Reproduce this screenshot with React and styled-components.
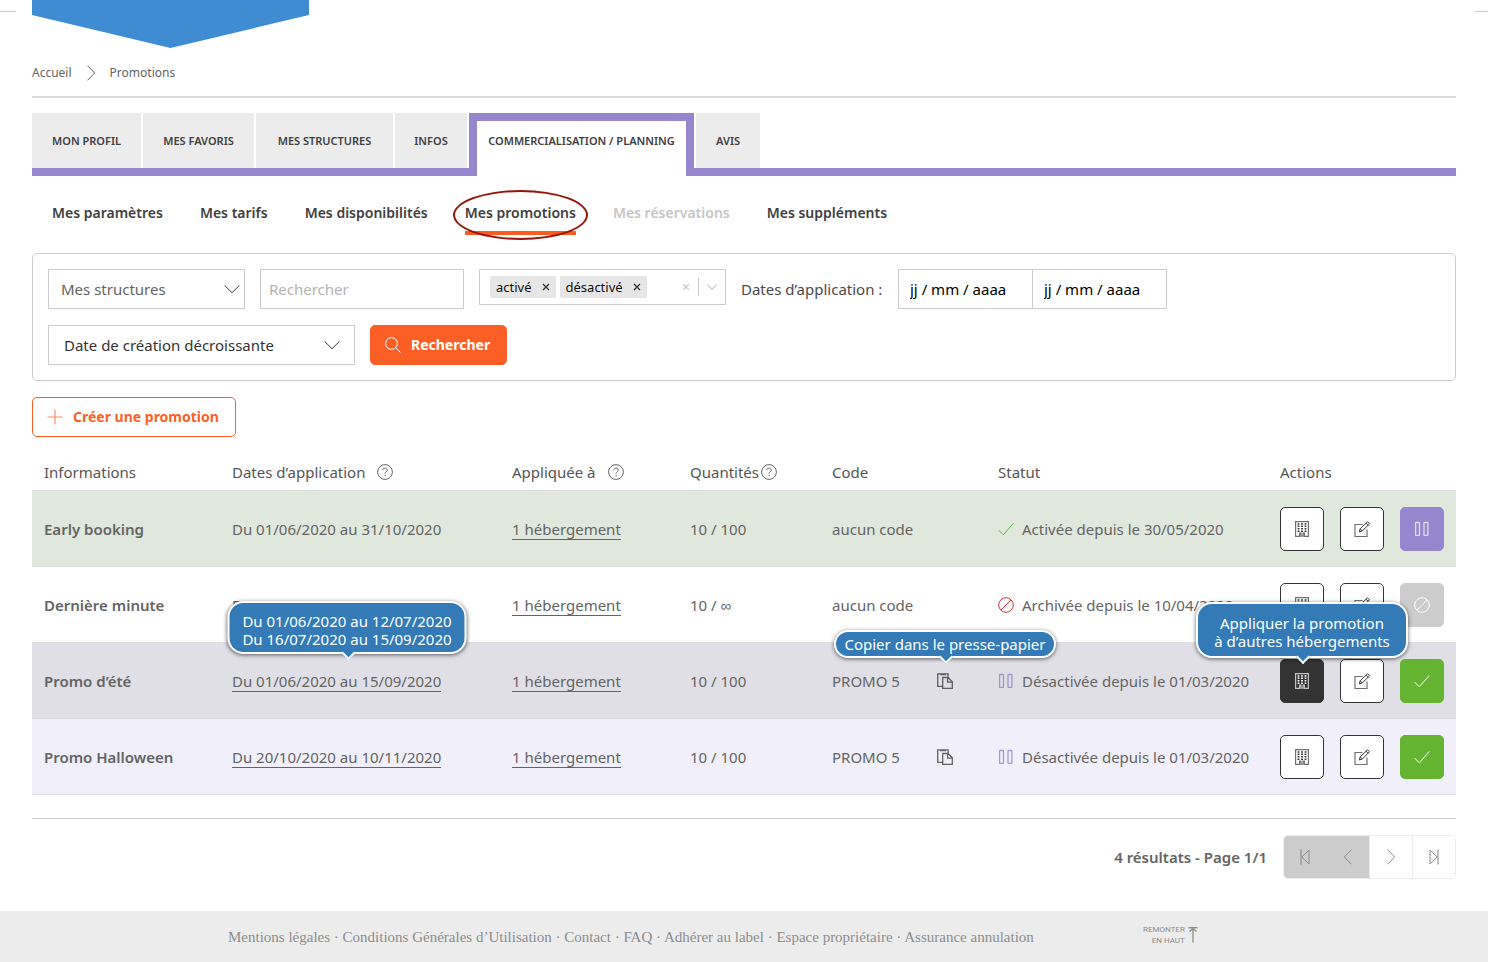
import React from "react";
import styled, { createGlobalStyle, css } from "styled-components";

const GlobalStyle = createGlobalStyle`
  * {
    box-sizing: border-box;
  }

  body {
    margin: 0;
    background-color: #fff;
    color: #646464;
    font-family: "Noto Sans", sans-serif;
    font-size: 15px;
    line-height: 20px;
  }

  button,
  input,
  select {
    font: inherit;
    color: inherit;
    margin: 0;
  }

  button {
    cursor: pointer;
  }

  a {
    color: inherit;
    text-decoration: none;
  }

  svg {
    display: block;
    flex: none;
  }
`;

/* ---------- icons ---------- */

const Icon = ({ size = 16, children, ...props }) => (
  <svg
    width={size}
    height={size}
    viewBox="0 0 16 16"
    fill="none"
    stroke="currentColor"
    strokeWidth="1"
    aria-hidden="true"
    {...props}
  >
    {children}
  </svg>
);

const CheckIcon = () => (
  <Icon>
    <path d="M0.7 9.2 5.3 13.8 15.3 2.5" />
  </Icon>
);

const BanIcon = () => (
  <Icon>
    <circle cx="8" cy="8" r="7.3" />
    <path d="M3 13 13 3" />
  </Icon>
);

const PauseIcon = () => (
  <Icon strokeWidth="1.3" strokeOpacity="0.7">
    <rect x="1.6" y="1.5" width="3.9" height="12.8" rx="0.4" />
    <rect x="10" y="1.5" width="3.9" height="12.8" rx="0.4" />
  </Icon>
);

const BuildingIcon = () => (
  <Icon>
    <path
      d="M1.6 0.6h12.8v14.8h-4v-3.2h-1.4v3h-2v-3h-1.4v3.2h-4z"
      strokeWidth="1.2"
      strokeOpacity="0.7"
    />
    <path
      d="M4.5 2.2v9M8 2.2v9M11.5 2.2v9"
      strokeWidth="1.8"
      strokeDasharray="1.5 0.9"
    />
  </Icon>
);

const EditIcon = () => (
  <Icon>
    <path d="M8.5 3.5h-7.5v12h12v-7" strokeWidth="1.2" strokeOpacity="0.7" />
    <path d="M5.3 10.9l0.9-3.1 7.3-7 2 2-7.2 7.2zM12 2.2l2.2 2.2M6.3 7.9l2.1 2.1" />
  </Icon>
);

const CopyIcon = () => (
  <Icon strokeWidth="1.3" strokeOpacity="0.75">
    <path d="M5.5 13.4h-4.8v-12.5h10.4v3M3 1.6h6" />
    <path d="M5.7 4.5h5.3l4.3 4.3v6.5h-9.6zM10.6 4.5v4.7h4.7" />
  </Icon>
);

const HelpIcon = () => (
  <Icon strokeOpacity="0.9">
    <circle cx="8" cy="8" r="7.4" />
    <path d="M5.8 6.3c0-1.3 1-2.2 2.2-2.2s2.2.8 2.2 2c0 1.6-2.1 1.7-2.1 3.5M8.1 11v1.3" />
  </Icon>
);

const SearchIcon = () => (
  <Icon>
    <circle cx="6.5" cy="6.5" r="5.9" />
    <path d="M11 11l4.5 4.5" />
  </Icon>
);

const PlusIcon = () => (
  <Icon strokeWidth="1.2" strokeOpacity="0.7">
    <path d="M8 0.5v15M0.5 8h15" />
  </Icon>
);

const ChevronDown = (props) => (
  <Icon {...props}>
    <path d="M0.7 4.5 8 11.7 15.3 4.5" />
  </Icon>
);

const ChevronRight = () => (
  <Icon>
    <path d="M4.5 0.7 11.7 8 4.5 15.3" />
  </Icon>
);

const ChevronLeft = () => (
  <Icon>
    <path d="M11.5 0.7 4.3 8 11.5 15.3" />
  </Icon>
);

const FirstIcon = () => (
  <Icon>
    <path d="M4 0.5v15" strokeWidth="1.6" strokeOpacity="0.7" />
    <path d="M12 1v14L4.8 8z" />
  </Icon>
);

const LastIcon = () => (
  <Icon>
    <path d="M12 0.5v15" strokeWidth="1.6" strokeOpacity="0.7" />
    <path d="M4 1v14L11.2 8z" />
  </Icon>
);

const TopIcon = () => (
  <Icon>
    <path d="M3.5 0.7h9" strokeWidth="1.4" />
    <path d="M8 1.5v14M4.5 4.5 8 1.5 11.5 4.5" strokeWidth="1.3" />
  </Icon>
);

const CrossIcon = () => (
  <Icon size={8}>
    <path d="M2 2l12 12M14 2 2 14" strokeWidth="2.6" />
  </Icon>
);

/* ---------- header ---------- */

const Header = styled.header`
  display: flex;
  height: 48px;
`;

const Dash = styled.span`
  width: ${(props) => (props.$end ? "13px" : "16px")};
  height: 1px;
  margin-top: 11px;
  margin-left: ${(props) => (props.$end ? "auto" : "0")};
  background-color: #ccc;
`;

const Banner = styled.div`
  width: 277px;
  margin-left: 16px;
  background-color: #3f8cd2;
  clip-path: polygon(0 0, 100% 0, 100% 15px, 50% 100%, 0 15px);
`;

const Page = styled.div`
  padding: 0 32px;
`;

const Breadcrumb = styled.nav`
  display: flex;
  align-items: center;
  gap: 11px;
  height: 50px;
  padding-top: 2px;
  border-bottom: 2px solid #d9d9d9;
  font-size: 12px;
`;

const TabBar = styled.nav`
  display: flex;
  gap: 2px;
  height: 63px;
  margin-top: 15px;
  background: linear-gradient(#9586cd, #9586cd) bottom / 100% 8px no-repeat;
`;

const Tab = styled.a`
  display: flex;
  align-items: center;
  justify-content: center;
  width: ${(props) => props.$width}px;
  height: 55px;
  background-color: #ececec;
  color: #404040;
  font-size: 11px;
  font-weight: 600;
  white-space: nowrap;

  ${(props) =>
    props.$active &&
    css`
      height: 63px;
      padding-bottom: 16px;
      border: 8px solid #9586cd;
      border-bottom: 0;
      background-color: #fff;
    `}
`;

const SubNav = styled.nav`
  display: flex;
  gap: 37px;
  padding: 24px 20px 18px;
`;

const SubLink = styled.a`
  position: relative;
  height: 35px;
  padding-top: 3px;
  color: ${(props) => (props.$disabled ? "#c6c6c6" : "#404040")};
  font-size: 14px;
  font-weight: 600;
  border-bottom: 4px solid ${(props) => (props.$active ? "#fb5a22" : "transparent")};
`;

const Ellipse = styled.span`
  position: absolute;
  top: -10px;
  left: -12px;
  right: -12px;
  height: 50px;
  border: 2px solid #971508;
  border-radius: 50%;
`;

/* ---------- filters ---------- */

const Filters = styled.form`
  display: flex;
  flex-direction: column;
  gap: 16px;
  padding: 15px;
  border: 1px solid #ccc;
  border-radius: 5px;
`;

const FilterRow = styled.div`
  display: flex;
  align-items: flex-start;
  gap: 15px;
`;

const SelectBox = styled.div`
  display: grid;
  align-items: center;
  width: ${(props) => props.$width}px;
  height: 40px;
  border: 1px solid #ccc;
  color: ${(props) => (props.$dark ? "#333" : "#646464")};

  select,
  svg {
    grid-area: 1 / 1;
  }

  select {
    height: 38px;
    padding: 0 ${(props) => (props.$dark ? "15px" : "12px")};
    border: 0;
    background: none;
    appearance: none;
  }

  svg {
    justify-self: end;
    margin-right: ${(props) => (props.$dark ? "14px" : "4px")};
    pointer-events: none;
    color: #333;
  }
`;

const TextInput = styled.input`
  width: ${(props) => props.$width}px;
  height: 40px;
  padding: 0 8px;
  border: 1px solid #ccc;
  background-color: #fff;

  &::placeholder {
    color: #b4b4b4;
    opacity: 1;
  }
`;

const MultiSelect = styled.div`
  display: flex;
  align-items: center;
  gap: 4px;
  width: 247px;
  height: 36px;
  padding: 0 8px 0 10px;
  border: 1px solid #ccc;
  color: #111;
  font-size: 13px;
`;

const Chip = styled.span`
  display: flex;
  align-items: center;
  gap: 10px;
  height: 22px;
  padding: 0 6px;
  border-radius: 2px;
  background-color: #e6e6e6;
`;

const BareButton = styled.button`
  padding: 0;
  border: 0;
  background: none;
  line-height: 0;
  color: ${(props) => (props.$muted ? "#ccc" : "#333")};
`;

const MultiTools = styled.span`
  display: flex;
  align-items: center;
  gap: 8px;
  margin-left: auto;
`;

const Divider = styled.span`
  width: 1px;
  height: 18px;
  background-color: #ccc;
`;

const DateLabel = styled.label`
  width: 142px;
  line-height: 40px;
  white-space: nowrap;
  color: #4a4a4a;
`;

const DateRange = styled.div`
  display: flex;

  input {
    width: 135px;
    height: 40px;
    padding: 0 11px;
    border: 1px solid #ccc;
    color: #000;
  }

  input + input {
    margin-left: -1px;
  }

  input::placeholder {
    color: #000;
    opacity: 1;
  }
`;

const Button = styled.button`
  display: inline-flex;
  align-items: center;
  gap: 10px;
  height: 40px;
  padding: 0 16px 0 14px;
  border: 1px solid #fb5f26;
  border-radius: 5px;
  background-color: ${(props) => (props.$outline ? "#fff" : "#fb5f26")};
  color: ${(props) => (props.$outline ? "#fb5f26" : "#fff")};
  font-size: 14px;
  font-weight: 700;
`;

const Toolbar = styled.div`
  display: flex;
  margin: 16px 0;
`;

/* ---------- table ---------- */

const Table = styled.table`
  width: 100%;
  table-layout: fixed;
  border-spacing: 0;
  border-bottom: 1px solid #dddde0;

  th,
  td {
    padding: 0 12px;
    text-align: left;
    white-space: nowrap;
  }

  thead th {
    height: 37px;
    font-weight: 400;
    color: #555;
  }

  tbody th,
  tbody td {
    height: 76px;
    border-top: 1px solid #dddde0;
  }

  tbody th {
    font-weight: 600;
  }
`;

const rowColors = {
  active: "#e0e7dc",
  archived: "#fff",
  hovered: "#e0dfe6",
  disabled: "#f1f0fa",
};

const Row = styled.tr`
  background-color: ${(props) => rowColors[props.$kind]};
`;

const Head = styled.span`
  display: flex;
  align-items: center;
  gap: ${(props) => (props.$tight ? "2px" : "12px")};
`;

const Anchor = styled.span`
  position: relative;
  display: inline-flex;
`;

const DateAnchor = styled(Anchor)`
  width: 230px;
`;

const Underlined = styled.a`
  border-bottom: 1px solid #646464;
`;

const Code = styled.div`
  display: flex;
  align-items: center;
`;

const CodeText = styled.span`
  width: 105px;
`;

const statusColors = {
  check: "#5fb836",
  ban: "#c8343a",
  pause: "#8575c6",
};

const Status = styled.div`
  display: flex;
  align-items: center;
  gap: 8px;

  svg {
    color: ${(props) => statusColors[props.$icon]};
  }
`;

const Actions = styled.div`
  display: flex;
  gap: 16px;
`;

const actionStyles = {
  plain: ["#fff", "#333", "#333"],
  dark: ["#333", "#333", "#fff"],
  pause: ["#9586cd", "#9586cd", "#fff"],
  ban: ["#ccc", "#ccc", "#fff"],
  check: ["#64b432", "#64b432", "#fff"],
};

const ActionButton = styled.button`
  display: flex;
  align-items: center;
  justify-content: center;
  width: 44px;
  height: 44px;
  padding: 0;
  border: 1px solid ${(props) => actionStyles[props.$look][1]};
  border-radius: 5px;
  background-color: ${(props) => actionStyles[props.$look][0]};
  color: ${(props) => actionStyles[props.$look][2]};
`;

const tooltipPadding = {
  small: "3px 0",
  medium: "9px 0 4px",
  large: "10px 0 6px",
};

const Tooltip = styled.span`
  position: absolute;
  z-index: 2;
  bottom: ${(props) => props.$bottom}px;
  left: 50%;
  transform: translateX(-50%);
  width: ${(props) => props.$width}px;
  padding: ${(props) => tooltipPadding[props.$size]};
  border: 2px solid #fff;
  border-radius: 16px;
  background-color: #337ab7;
  box-shadow: 0 1px 4px rgba(0, 0, 0, 0.6);
  color: #fff;
  line-height: 18px;
  text-align: center;
  white-space: pre-line;

  &::after {
    content: "";
    position: absolute;
    left: 50%;
    bottom: -6px;
    width: 8px;
    height: 8px;
    margin-left: -4px;
    border: solid #fff;
    border-width: 0 2px 2px 0;
    background-color: #337ab7;
    transform: rotate(45deg);
  }
`;

/* ---------- pagination and footer ---------- */

const Pagination = styled.div`
  display: flex;
  align-items: center;
  justify-content: flex-end;
  gap: 16px;
  margin-top: 23px;
  padding: 16px 0 32px;
  border-top: 1px solid #ccc;
  font-weight: 600;
`;

const Pages = styled.div`
  display: flex;
  width: 173px;
  height: 44px;
  border: 1px solid #ececec;
  border-radius: 5px;
  overflow: hidden;
`;

const PageButton = styled.button`
  flex: 1;
  display: flex;
  align-items: center;
  justify-content: center;
  padding: 0;
  border: 0;
  background-color: #fff;
  color: #8c8c8c;

  & + & {
    border-left: 1px solid #ececec;
  }

  &:disabled {
    background-color: #ccc;
    border-left-color: #ccc;
  }
`;

const Footer = styled.footer`
  display: grid;
  grid-template-columns: 915px auto;
  align-items: center;
  justify-content: start;
  height: 51px;
  padding: 0 32px 0 228px;
  background-color: #ececec;
  color: #8c8c8c;
  font-family: "Liberation Serif", serif;
  font-size: 15px;
  white-space: nowrap;
`;

const BackToTop = styled.a`
  display: flex;
  align-items: center;
  padding-bottom: 4px;
  font-family: Roboto, sans-serif;
  font-size: 8px;
  line-height: 11px;
  text-align: right;
`;

const tabs = [
  ["MON PROFIL", 109],
  ["MES FAVORIS", 111],
  ["MES STRUCTURES", 137],
  ["INFOS", 72],
  ["COMMERCIALISATION / PLANNING", 225],
  ["AVIS", 64],
];

const subLinks = [
  "Mes paramètres",
  "Mes tarifs",
  "Mes disponibilités",
  "Mes promotions",
  "Mes réservations",
  "Mes suppléments",
];

const columns = [188, 280, 178, 142, 166, 282, 188];

const promotions = [
  {
    kind: "active",
    name: "Early booking",
    dates: "Du 01/06/2020 au 31/10/2020",
    quantity: "10 / 100",
    icon: "check",
    status: "Activée depuis le 30/05/2020",
    action: "pause",
  },
  {
    kind: "archived",
    name: "Dernière minute",
    dates: "Du 10/04/2020 au 10/10/2020",
    quantity: "10 / ∞",
    icon: "ban",
    status: "Archivée depuis le 10/04/2020",
    action: "ban",
  },
  {
    kind: "hovered",
    name: "Promo d’été",
    dates: "Du 01/06/2020 au 15/09/2020",
    periods: "Du 01/06/2020 au 12/07/2020\nDu 16/07/2020 au 15/09/2020",
    quantity: "10 / 100",
    code: "PROMO 5",
    icon: "pause",
    status: "Désactivée depuis le 01/03/2020",
    action: "check",
  },
  {
    kind: "disabled",
    name: "Promo Halloween",
    dates: "Du 20/10/2020 au 10/11/2020",
    quantity: "10 / 100",
    code: "PROMO 5",
    icon: "pause",
    status: "Désactivée depuis le 01/03/2020",
    action: "check",
  },
];

const footerLinks = [
  "Mentions légales",
  "Conditions Générales d’Utilisation",
  "Contact",
  "FAQ",
  "Adhérer au label",
  "Espace propriétaire",
  "Assurance annulation",
];

const stateIcons = {
  check: <CheckIcon />,
  ban: <BanIcon />,
  pause: <PauseIcon />,
};

const PromotionRow = ({ promo }) => {
  const hovered = promo.kind === "hovered";

  return (
    <Row $kind={promo.kind}>
      <th scope="row">{promo.name}</th>
      <td>
        <DateAnchor>
          <span>
            {promo.code ? <Underlined href="#dates">{promo.dates}</Underlined> : promo.dates}
          </span>
          {promo.periods && (
            <Tooltip role="tooltip" $size="medium" $width={239} $bottom={37}>
              {promo.periods}
            </Tooltip>
          )}
        </DateAnchor>
      </td>
      <td>
        <Underlined href="#hebergements">1 hébergement</Underlined>
      </td>
      <td>{promo.quantity}</td>
      <td>
        {promo.code ? (
          <Code>
            <CodeText>{promo.code}</CodeText>
            <Anchor>
              <BareButton type="button" aria-label="Copier dans le presse-papier">
                <CopyIcon />
              </BareButton>
              {hovered && (
                <Tooltip role="tooltip" $size="small" $width={222} $bottom={31}>
                  Copier dans le presse-papier
                </Tooltip>
              )}
            </Anchor>
          </Code>
        ) : (
          "aucun code"
        )}
      </td>
      <td>
        <Status $icon={promo.icon}>
          {stateIcons[promo.icon]}
          {promo.status}
        </Status>
      </td>
      <td>
        <Actions>
          <Anchor>
            <ActionButton type="button" aria-label="Appliquer" $look={hovered ? "dark" : "plain"}>
              <BuildingIcon />
            </ActionButton>
            {hovered && (
              <Tooltip role="tooltip" $size="large" $width={212} $bottom={45}>
                {"Appliquer la promotion\nà d’autres hébergements"}
              </Tooltip>
            )}
          </Anchor>
          <ActionButton type="button" aria-label="Modifier" $look="plain">
            <EditIcon />
          </ActionButton>
          <ActionButton type="button" aria-label="Changer le statut" $look={promo.action}>
            {stateIcons[promo.action]}
          </ActionButton>
        </Actions>
      </td>
    </Row>
  );
};

const App = () => (
  <>
    <GlobalStyle />
    <Header>
      <Dash />
      <Banner />
      <Dash $end />
    </Header>

    <Page>
      <Breadcrumb>
        <a href="#accueil">Accueil</a>
        <ChevronRight />
        <span>Promotions</span>
      </Breadcrumb>

      <TabBar>
        {tabs.map(([label, width], i) => (
          <Tab key={label} href="#tab" $width={width} $active={i === 4}>
            {label}
          </Tab>
        ))}
      </TabBar>

      <SubNav>
        {subLinks.map((label, i) => (
          <SubLink key={label} href="#section" $active={i === 3} $disabled={i === 4}>
            {label}
            {i === 3 && <Ellipse />}
          </SubLink>
        ))}
      </SubNav>

      <Filters>
        <FilterRow>
          <SelectBox $width={197}>
            <select aria-label="Structures">
              <option>Mes structures</option>
            </select>
            <ChevronDown />
          </SelectBox>
          <TextInput type="text" aria-label="Rechercher" placeholder="Rechercher" $width={204} />
          <MultiSelect>
            {["activé", "désactivé"].map((label) => (
              <Chip key={label}>
                {label}
                <BareButton type="button" aria-label={`Retirer ${label}`}>
                  <CrossIcon />
                </BareButton>
              </Chip>
            ))}
            <MultiTools>
              <BareButton type="button" aria-label="Tout effacer" $muted>
                <CrossIcon />
              </BareButton>
              <Divider />
              <BareButton type="button" aria-label="Ouvrir la liste" $muted>
                <ChevronDown size={10} strokeWidth="2" />
              </BareButton>
            </MultiTools>
          </MultiSelect>
          <DateLabel htmlFor="date-start">Dates d’application :</DateLabel>
          <DateRange>
            <input id="date-start" type="text" placeholder="jj / mm / aaaa" />
            <input type="text" aria-label="Date de fin" placeholder="jj / mm / aaaa" />
          </DateRange>
        </FilterRow>
        <FilterRow>
          <SelectBox $width={307} $dark>
            <select aria-label="Tri">
              <option>Date de création décroissante</option>
            </select>
            <ChevronDown />
          </SelectBox>
          <Button type="submit">
            <SearchIcon />
            Rechercher
          </Button>
        </FilterRow>
      </Filters>

      <Toolbar>
        <Button type="button" $outline>
          <PlusIcon />
          Créer une promotion
        </Button>
      </Toolbar>

      <Table>
        <colgroup>
          {columns.map((width, i) => (
            <col key={i} width={width} />
          ))}
        </colgroup>
        <thead>
          <tr>
            <th>Informations</th>
            <th>
              <Head>
                Dates d’application
                <HelpIcon />
              </Head>
            </th>
            <th>
              <Head>
                Appliquée à
                <HelpIcon />
              </Head>
            </th>
            <th>
              <Head $tight>
                Quantités
                <HelpIcon />
              </Head>
            </th>
            <th>Code</th>
            <th>Statut</th>
            <th>Actions</th>
          </tr>
        </thead>
        <tbody>
          {promotions.map((promo) => (
            <PromotionRow key={promo.name} promo={promo} />
          ))}
        </tbody>
      </Table>

      <Pagination>
        4 résultats - Page 1/1
        <Pages>
          <PageButton type="button" aria-label="Première page" disabled>
            <FirstIcon />
          </PageButton>
          <PageButton type="button" aria-label="Page précédente" disabled>
            <ChevronLeft />
          </PageButton>
          <PageButton type="button" aria-label="Page suivante">
            <ChevronRight />
          </PageButton>
          <PageButton type="button" aria-label="Dernière page">
            <LastIcon />
          </PageButton>
        </Pages>
      </Pagination>
    </Page>

    <Footer>
      <div>
        {footerLinks.map((label, i) => (
          <React.Fragment key={label}>
            {i > 0 && " · "}
            <a href="#footer">{label}</a>
          </React.Fragment>
        ))}
      </div>
      <BackToTop href="#top">
        <span>
          REMONTER
          <br />
          EN HAUT
        </span>
        <TopIcon />
      </BackToTop>
    </Footer>
  </>
);

export default App;
